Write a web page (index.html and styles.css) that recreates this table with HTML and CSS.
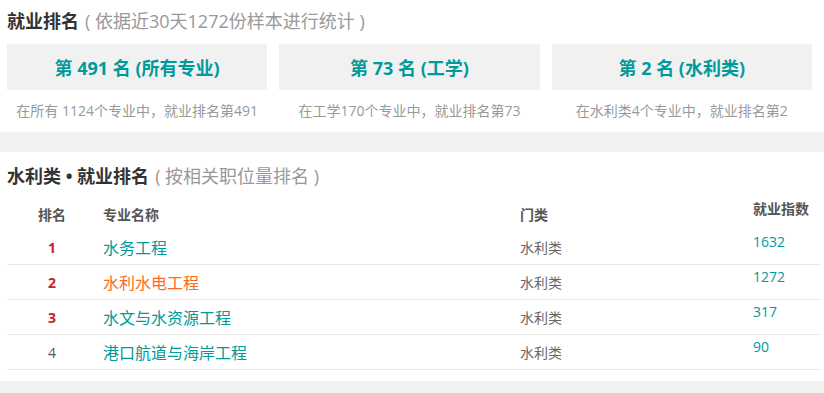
FILE: index.html
```html
<!DOCTYPE html>
<html lang="zh-CN">
<head>
<meta charset="utf-8">
<title>就业排名</title>
<link rel="stylesheet" href="styles.css">
</head>
<body>
<section class="summary">
  <h2 class="title">就业排名<span class="sub">( 依据近30天1272份样本进行统计 )</span></h2>
  <div class="cards">
    <div class="card">
      <div class="card-box">第 491 名 (所有专业)</div>
      <p class="card-desc">在所有 1124个专业中，就业排名第491</p>
    </div>
    <div class="card">
      <div class="card-box">第 73 名 (工学)</div>
      <p class="card-desc">在工学170个专业中，就业排名第73</p>
    </div>
    <div class="card">
      <div class="card-box">第 2 名 (水利类)</div>
      <p class="card-desc">在水利类4个专业中，就业排名第2</p>
    </div>
  </div>
</section>
<div class="band"></div>
<section class="ranking">
  <h2 class="title">水利类 • 就业排名<span class="sub">( 按相关职位量排名 )</span></h2>
  <div class="table">
    <div class="row head">
      <div class="c-rank">排名</div>
      <div class="c-name">专业名称</div>
      <div class="c-cat">门类</div>
      <div class="c-idx">就业指数</div>
    </div>
    <div class="row">
      <div class="c-rank top">1</div>
      <div class="c-name">水务工程</div>
      <div class="c-cat">水利类</div>
      <div class="c-idx">1632</div>
    </div>
    <div class="row">
      <div class="c-rank top">2</div>
      <div class="c-name current">水利水电工程</div>
      <div class="c-cat">水利类</div>
      <div class="c-idx">1272</div>
    </div>
    <div class="row">
      <div class="c-rank top">3</div>
      <div class="c-name">水文与水资源工程</div>
      <div class="c-cat">水利类</div>
      <div class="c-idx">317</div>
    </div>
    <div class="row">
      <div class="c-rank">4</div>
      <div class="c-name">港口航道与海岸工程</div>
      <div class="c-cat">水利类</div>
      <div class="c-idx">90</div>
    </div>
  </div>
</section>
<div class="band bottom"></div>
</body>
</html>
```
FILE: styles.css
```css
html, body {
  margin: 0;
  padding: 0;
  background: #fff;
  font-family: "Open Sans", "Noto Sans CJK SC", sans-serif;
  color: #333;
}

.title {
  margin: 0;
  font-size: 18px;
  font-weight: bold;
  color: #333;
  line-height: 24px;
}

.sub {
  font-weight: normal;
  font-size: 18px;
  color: #999;
  margin-left: 6px;
}

.summary {
  padding: 9px 12px 0 7px;
}

.cards {
  display: flex;
  gap: 12px;
  margin-top: 11px;
}

.card {
  flex: 1;
}

.card-box {
  height: 46px;
  background: #f1f1f1;
  display: flex;
  align-items: center;
  justify-content: center;
  font-size: 18px;
  font-weight: bold;
  color: #009a9a;
}

.card-desc {
  margin: 0;
  padding: 11px 0 10px;
  text-align: center;
  font-size: 14px;
  line-height: 20px;
  color: #999;
}

.band {
  height: 20px;
  background: #f1f1f1;
  margin-top: 1px;
}

.band.bottom {
  height: 13px;
  margin-top: 11px;
}

.ranking {
  padding: 12px 3px 0 7px;
}

.table {
  margin-top: 10px;
}

.row {
  display: grid;
  grid-template-columns: 90px 417px 233px 1fr;
  height: 34px;
  border-bottom: 1px solid #e8e8e8;
  align-items: center;
}

.row > div {
  padding-left: 6px;
}

.row .c-rank {
  padding-left: 0;
  text-align: center;
  font-size: 14px;
  color: #555;
}

.row .c-rank.top {
  color: #c8202c;
  font-weight: bold;
}

.c-name {
  font-size: 16px;
  color: #009a9a;
}

.c-name.current {
  color: #ff6a1a;
}

.c-cat {
  font-size: 14px;
  color: #666;
}

.c-idx {
  font-size: 14px;
  color: #009a9a;
  align-self: start;
  padding-top: 2px;
}

.row.head {
  height: 32px;
  border-bottom: none;
  font-weight: bold;
}

.row.head > div {
  font-size: 14px;
  color: #555;
  font-weight: bold;
}

.row.head .c-idx {
  padding-top: 0;
}
```
